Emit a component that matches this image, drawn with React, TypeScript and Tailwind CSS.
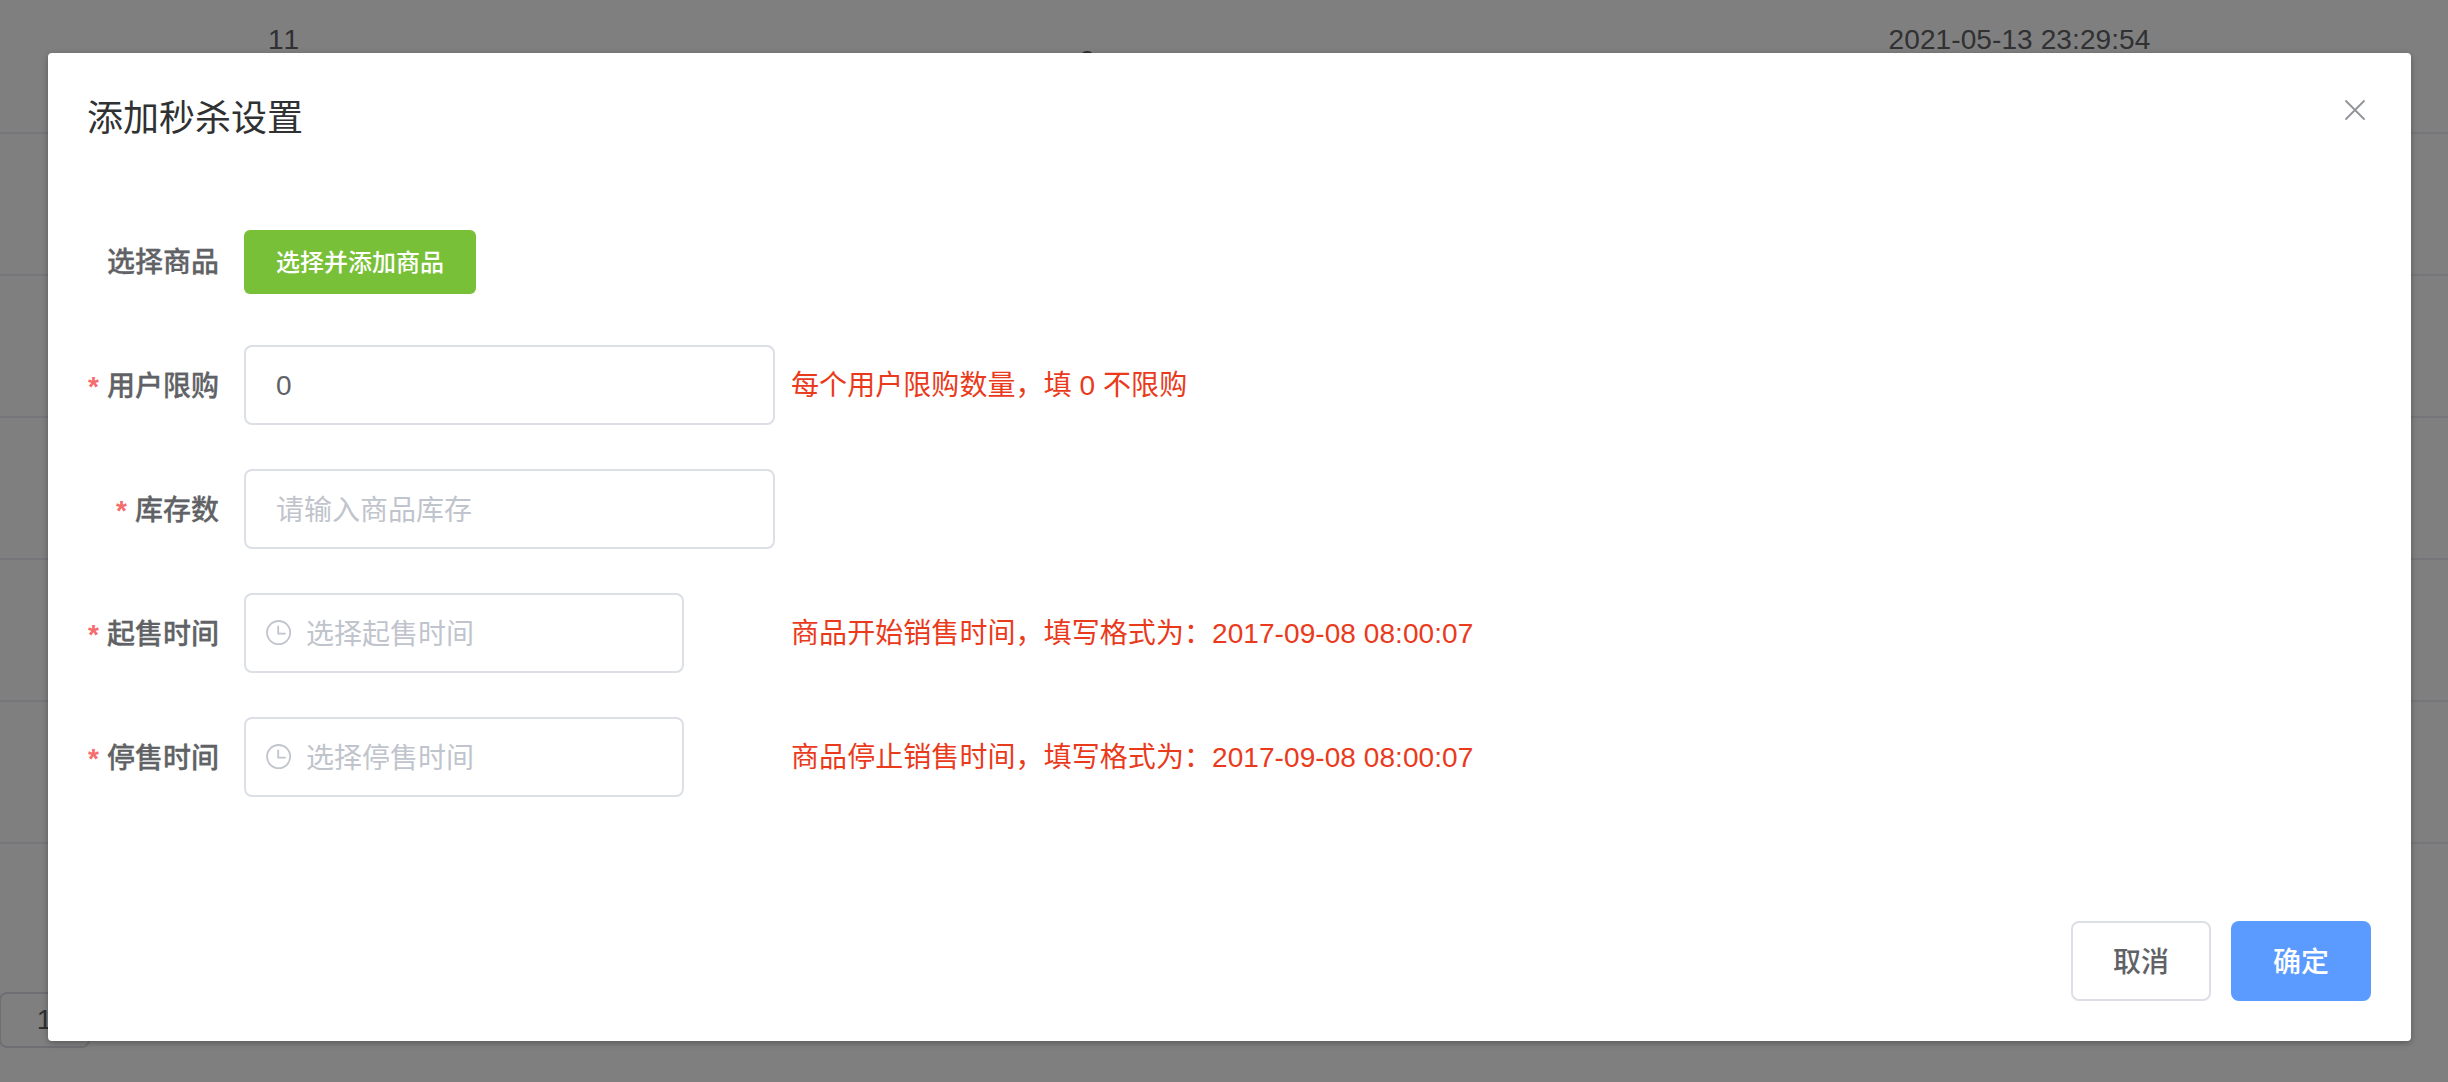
import { useState } from "react";
import type { ReactNode } from "react";

const ROWS = [0, 1, 2, 3, 4];

const INPUT =
  "h-20 rounded-lg border-2 border-[#dcdfe6] bg-white text-[28px] text-[#606266] placeholder:text-[#c0c4cc] placeholder:opacity-100 outline-none";

function ClockIcon() {
  return (
    <svg className="w-[26px] h-[26px] shrink-0" viewBox="0 0 26 26" fill="none" stroke="#c0c4cc" strokeWidth="1.8">
      <circle cx="12.6" cy="12.6" r="11.6" />
      <path d="M12.2 6.5V13.6H19" strokeLinecap="round" />
    </svg>
  );
}

type FieldProps = {
  label: string;
  required?: boolean;
  hint?: string;
  children: ReactNode;
};

function Field({ label, required, hint, children }: FieldProps) {
  return (
    <div className="flex h-20 items-center">
      <label className="w-[156px] shrink-0 pt-[3px] pr-[25px] text-right text-[28px] leading-[80px] font-medium text-[#606266] whitespace-nowrap [-webkit-text-stroke:0.3px]">
        {required && <span className="mr-2 font-bold text-[#f56c6c] [-webkit-text-stroke:0]">*</span>}
        {label}
      </label>
      <div className="flex w-[547px] items-center">{children}</div>
      {hint && <span className="pt-[2px] text-[28px] leading-[80px] tracking-[0.07px] text-[#ea3a1c]">{hint}</span>}
    </div>
  );
}

function DateField({ placeholder }: { placeholder: string }) {
  return (
    <div className={`${INPUT} flex w-[440px] items-center gap-[14px] pl-[20px]`}>
      <ClockIcon />
      <input className="w-[340px] pt-[3px] outline-none placeholder:text-[#c0c4cc] placeholder:opacity-100" placeholder={placeholder} />
    </div>
  );
}

function TablePage() {
  return (
    <div className="h-[1082px] overflow-hidden bg-white text-[28px] text-[#606266] [font-kerning:none]">
      <div className="flex h-[134px] items-start border-b-2 border-[#ebebf5] leading-[46px] pt-[17px]">
        <span className="w-[567px] text-center">11</span>
        <span className="w-[1040px] pt-[21px] text-center">0</span>
        <span className="w-[825px] text-center tracking-[0.1px]">2021-05-13 23:29:54</span>
      </div>
      {ROWS.map((r) => (
        <div key={r} className="h-[142px] border-b-2 border-[#ebebf5]" />
      ))}
      <div className="mt-[148px] -ml-px flex h-14 w-[91px] items-center justify-center rounded-lg border-2 border-[#dcdfe6]">1</div>
    </div>
  );
}

export default function App() {
  const [limit, setLimit] = useState("0");

  return (
    <div className="relative h-[1082px] w-[2448px] overflow-hidden font-['Liberation_Sans','Noto_Sans_CJK_SC',sans-serif]">
      <TablePage />
      <div className="absolute inset-0 bg-black/50 pt-[53px] pl-12">
        <div className="flex h-[988px] w-[2363px] flex-col rounded bg-white shadow-[0_2px_6px_rgba(0,0,0,0.3)]">
          <header className="flex justify-between px-10 pt-10 pb-5">
            <h2 className="-ml-px h-[48px] pt-[2px] text-[36px] leading-[48px] text-[#303133]">添加秒杀设置</h2>
            <button type="button" className="mt-[6px] mr-[5px] h-[22px] w-[22px]" aria-label="关闭">
              <svg viewBox="0 0 22 22" fill="none" stroke="#909399" strokeWidth="1.8" strokeLinecap="round">
                <path d="M2 2L20 20M20 2L2 20" />
              </svg>
            </button>
          </header>

          <form className="flex flex-1 flex-col gap-11 px-10 pt-[60px]">
            <Field label="选择商品">
              <button type="button" className="mt-[2px] h-16 w-[232px] rounded-md bg-[#78c037] pt-[2px] text-2xl font-medium text-white">
                选择并添加商品
              </button>
            </Field>
            <Field label="用户限购" required hint="每个用户限购数量，填 0 不限购">
              <input className={`${INPUT} w-[531px] px-[30px] pt-[2px]`} value={limit} onChange={(e) => setLimit(e.target.value)} />
            </Field>
            <Field label="库存数" required>
              <input className={`${INPUT} w-[531px] px-[30px] pt-[3px]`} placeholder="请输入商品库存" />
            </Field>
            <Field label="起售时间" required hint="商品开始销售时间，填写格式为：2017-09-08 08:00:07">
              <DateField placeholder="选择起售时间" />
            </Field>
            <Field label="停售时间" required hint="商品停止销售时间，填写格式为：2017-09-08 08:00:07">
              <DateField placeholder="选择停售时间" />
            </Field>
          </form>

          <footer className="flex justify-end gap-5 px-10 pt-5 pb-10">
            <button type="button" className="h-20 w-[140px] rounded-lg border-2 border-[#dcdfe6] pt-[3px] text-[28px] font-medium text-[#606266]">
              取消
            </button>
            <button type="button" className="h-20 w-[140px] rounded-lg bg-[#5b9bff] pt-[3px] text-[28px] font-medium text-white">
              确定
            </button>
          </footer>
        </div>
      </div>
    </div>
  );
}
